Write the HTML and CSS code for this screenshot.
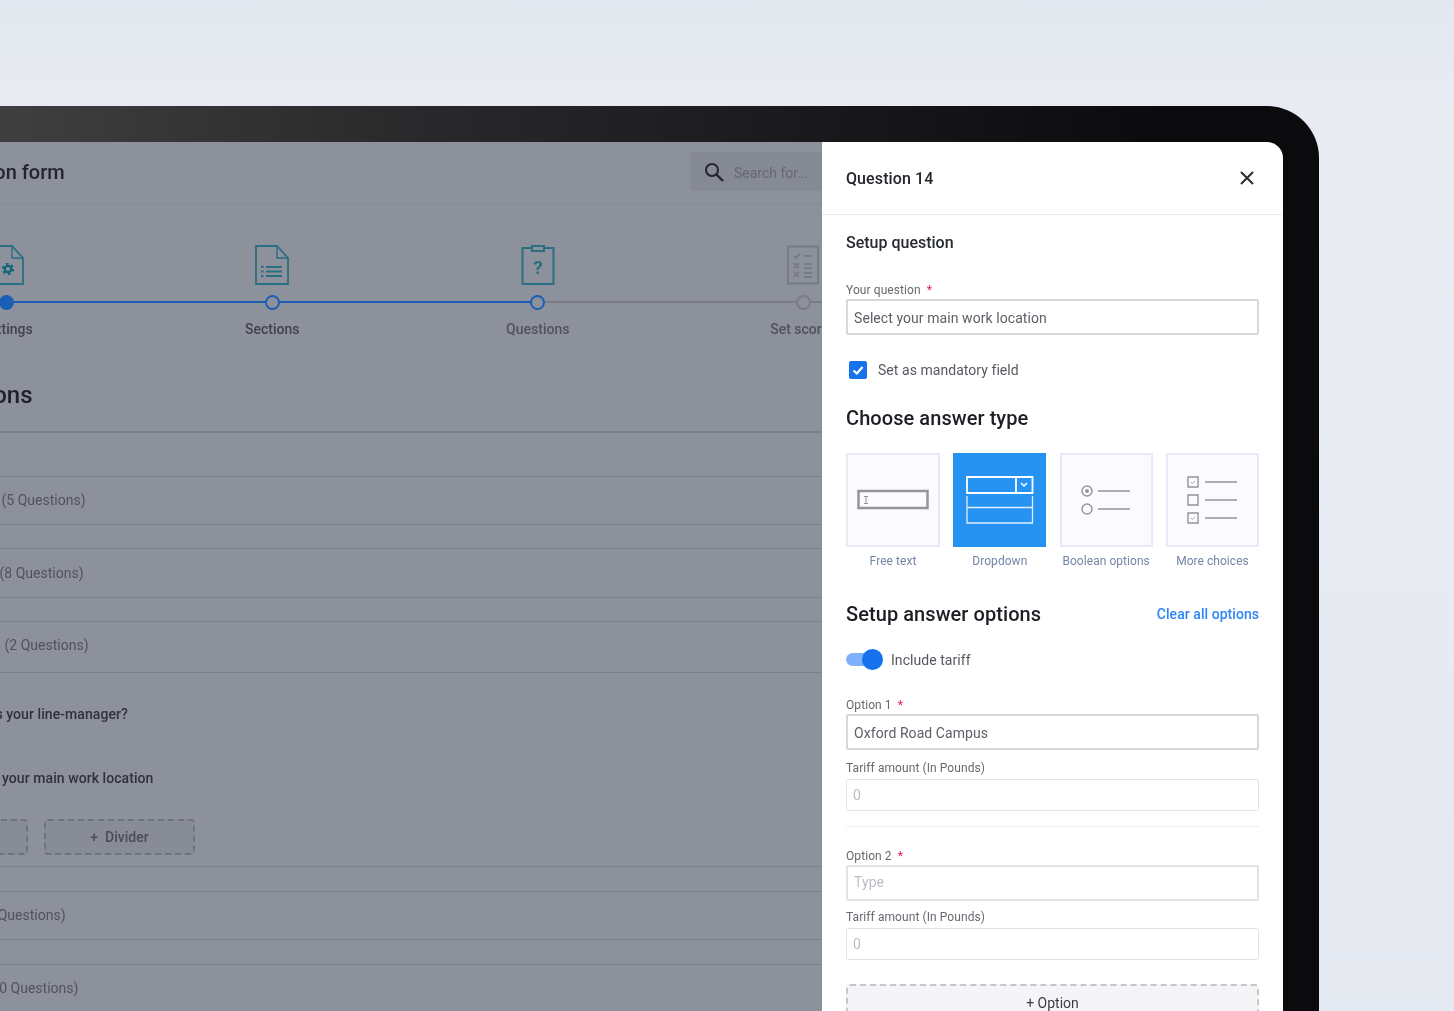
FILE: index.html
```html
<!DOCTYPE html>
<html lang="en">
<head>
<meta charset="utf-8">
<title>Question 14</title>
<link rel="stylesheet" href="styles.css">
</head>
<body>
<div class="device">
  <div class="screen">
    <main class="main">
      <div class="main-inner">
        <header class="topbar">
          <h1 class="form-title">Evaluation form</h1>
          <div class="search">
            <svg width="24" height="24" viewBox="0 0 24 24" fill="none" stroke="#22252e" stroke-width="2"><circle cx="10" cy="10" r="6"/><path d="M14.5 14.5 21 21" stroke-width="2.4"/></svg>
            <span>Search for...</span>
          </div>
        </header>
        <div class="stepper">
          <div class="step done">
            <svg class="step-icon" width="34" height="40" viewBox="0 0 34 40" fill="none" stroke="#2a6f80" stroke-width="1.8"><path d="M1 1h21l11 12v26H1z"/><path d="M22 1v12h11" stroke-width="1.4"/><circle cx="18" cy="24" r="3.2" stroke-width="2.2" stroke="#0e6478"/><circle cx="18" cy="24" r="5.2" stroke-width="1.8" stroke="#0e6478" stroke-dasharray="2.7 2.75"/></svg>
            <span class="dot"></span>
            <span class="step-label">Settings</span>
          </div>
          <div class="step active">
            <svg class="step-icon" width="34" height="40" viewBox="0 0 34 40" fill="none" stroke="#2a6f80" stroke-width="1.8"><path d="M1 1h21l11 12v26H1z"/><path d="M22 1v12h11" stroke-width="1.4"/><path d="M11 22h16M11 26.500h16M11 31h16M6 22h2.500M6 26.500h2.500M6 31h2.500" stroke-width="2"/></svg>
            <span class="dot"></span>
            <span class="step-label">Sections</span>
          </div>
          <div class="step active current">
            <svg class="step-icon" width="34" height="40" viewBox="0 0 34 40" fill="none" stroke="#2a6f80" stroke-width="2"><path d="M1.500 3h31v36h-31z"/><rect x="11" y="1" width="12" height="5" fill="#8d919c"/><text x="17" y="29" text-anchor="middle" class="icon-q">?</text></svg>
            <span class="dot"></span>
            <span class="step-label">Questions</span>
          </div>
          <div class="step">
            <svg class="step-icon" width="34" height="40" viewBox="0 0 34 40" fill="none" stroke="#777b86" stroke-width="2"><path d="M2 1.500h30v37H2z"/><path d="M8 11l2 2 4-4M8 18l5 5M13 18l-5 5M8 27l5 5M13 27l-5 5M18 11h8M18 19h8M18 23h8M18 28h8M18 32h8" stroke-width="1.800"/></svg>
            <span class="dot"></span>
            <span class="step-label">Set scores</span>
          </div>
        </div>
        <h2 class="section-title">Questions</h2>
        <div class="accordion">
          <div class="acc-row acc-first"><span class="acc-text">Section 1 (5 Questions)</span></div>
          <div class="acc-row acc-second"><span class="acc-text">Section 2 (8 Questions)</span></div>
          <div class="acc-open">
            <div class="acc-row acc-third"><span class="acc-text">Section 3 (2 Questions)</span></div>
            <p class="q q-one">Who is your line-manager?</p>
            <p class="q q-two">Select your main work location</p>
            <div class="add-row">
              <span class="add-btn add-question">+ Question</span>
              <span class="add-btn add-divider">+&nbsp; Divider</span>
            </div>
          </div>
          <div class="acc-row acc-fourth"><span class="acc-text">Section 4 (4 Questions)</span></div>
          <div class="acc-row acc-fifth"><span class="acc-text">Section 5 (10 Questions)</span></div>
        </div>
      </div>
    </main>
    <aside class="drawer">
      <header class="drawer-head">
        <h2 class="drawer-title">Question 14</h2>
        <svg width="24" height="24" viewBox="0 0 24 24" fill="none" stroke="#2a2d33" stroke-width="2"><path d="M6 6l12 12M18 6 6 18"/></svg>
      </header>
      <div class="drawer-body">
        <h3 class="sub-title">Setup question</h3>
        <label class="field-label label-question">Your question <i class="req">*</i></label>
        <div class="input input-tall">Select your main work location</div>
        <div class="check-row">
          <span class="checkbox"><svg width="18" height="18" viewBox="0 0 18 18" fill="none" stroke="#fff" stroke-width="2.200"><path d="M4.500 9.500 7.800 12.500 13.500 6"/></svg></span>
          <span class="check-text">Set as mandatory field</span>
        </div>
        <h3 class="big-title type-title">Choose answer type</h3>
        <div class="types">
          <div class="type">
            <div class="type-card">
              <svg width="72" height="22" viewBox="0 0 72 22" fill="none" stroke="#94949a"><path d="M1.500 2h69v17h-69z" stroke-width="2.500"/><path d="M7 7.500h4M7 14.500h4M9 7.500v7" stroke-width="1"/></svg>
            </div>
            <span class="type-label">Free text</span>
          </div>
          <div class="type">
            <div class="type-card selected">
              <svg width="68" height="48" viewBox="0 0 68 48" fill="none" stroke="#fff"><path d="M1 1h65.500v16H1zM50 1v16" stroke-width="1.800"/><path d="M1 20v27h65.500V20M1 31.500h65.500" stroke-width="1.300" opacity=".85"/><path d="M55 7l3 3 3-3" stroke-width="1.500"/></svg>
            </div>
            <span class="type-label">Dropdown</span>
          </div>
          <div class="type">
            <div class="type-card">
              <svg width="50" height="30" viewBox="0 0 50 30" fill="none" stroke="#94949a" stroke-width="1.400"><circle cx="6" cy="6" r="5"/><circle cx="6" cy="6" r="1.200" fill="#94949a"/><circle cx="6" cy="24" r="5"/><path d="M17 6h32M17 24h32"/></svg>
            </div>
            <span class="type-label">Boolean options</span>
          </div>
          <div class="type">
            <div class="type-card">
              <svg width="50" height="48" viewBox="0 0 50 48" fill="none" stroke="#94949a" stroke-width="1.400"><path d="M1 1h10v10H1zM1 19h10v10H1zM1 37h10v10H1z"/><path d="M4 6l1.500 1.500L8 5M4 42l1.500 1.500L8 41" stroke-width=".8"/><path d="M18 6h32M18 24h32M18 42h32"/></svg>
            </div>
            <span class="type-label">More choices</span>
          </div>
        </div>
        <div class="options-head">
          <h3 class="big-title">Setup answer options</h3>
          <a class="clear-link">Clear all options</a>
        </div>
        <div class="toggle-row">
          <span class="toggle"><span class="knob"></span></span>
          <span class="check-text">Include tariff</span>
        </div>
        <label class="field-label label-opt1">Option 1 <i class="req">*</i></label>
        <div class="input input-tall">Oxford Road Campus</div>
        <label class="field-label label-tariff">Tariff amount (In Pounds)</label>
        <div class="input input-short muted">0</div>
        <hr class="divider">
        <label class="field-label label-opt2">Option 2 <i class="req">*</i></label>
        <div class="input input-tall muted light">Type</div>
        <label class="field-label label-tariff2">Tariff amount (In Pounds)</label>
        <div class="input input-short muted light">0</div>
        <div class="add-option">+ Option</div>
      </div>
    </aside>
  </div>
</div>
</body>
</html>
```
FILE: styles.css
```css
* { box-sizing: border-box; }
html, body { margin: 0; height: 1011px; overflow: hidden; }
body {
  background: linear-gradient(180deg, #e3e8f0 0%, #e8ebf2 12%, #e5e9f1 100%);
  font-family: Roboto, "Liberation Sans", sans-serif;
  padding-top: 106px;
}
h1, h2, h3, p, hr { margin: 0; }
i { font-style: normal; }

.device {
  width: 1319px;
  height: 905px;
  padding: 36px 36px 0 0;
  border-top-right-radius: 52px;
  background: linear-gradient(90deg, #403f40 0%, #2a292b 30%, #1a191c 60%, #0b0a0c 88%);
}
.screen {
  display: flex;
  height: 869px;
  width: 1283px;
  overflow: hidden;
  border-top-right-radius: 16px;
}

/* dimmed page behind the drawer */
.main { width: 822px; flex: none; overflow: hidden; background: #8d919c; }
.main-inner { width: 822px; filter: blur(.5px); }
.topbar {
  display: flex;
  align-items: center;
  justify-content: space-between;
  height: 62px;
  border-bottom: 1px solid #858994;
}
.form-title { font-size: 20px; font-weight: 500; color: #23262f; margin: -2px 0 0 -76px; white-space: nowrap; }
.search {
  display: flex;
  align-items: center;
  gap: 8px;
  width: 132px;
  height: 39px;
  margin-top: -2px;
  padding-left: 12px;
  background: #868a95;
  border-radius: 4px 0 0 4px;
  font-size: 14px;
  color: #646873;
}
.search span { white-space: nowrap; padding-top: 2px; }

.stepper { display: flex; margin-left: -126px; height: 148px; padding-top: 41px; }
.step {
  position: relative;
  width: 265.5px;
  flex: none;
  display: flex;
  flex-direction: column;
  align-items: center;
}
.step::before {
  content: "";
  position: absolute;
  top: 56px;
  left: 50%;
  width: 265.5px;
  height: 2px;
  background: #797c85;
}
.done::before, .step.active::before { background: #1b5fb5; }
.step.current::before { background: #797c85; }
.step-icon { display: block; }
.dot {
  position: relative;
  width: 15px;
  height: 15px;
  margin-top: 10px;
  border-radius: 50%;
  border: 2px solid #797c85;
  background: #8d919c;
}
.step.active .dot { border-color: #1b5fb5; }
.done .dot { background: #1b5fb5; border-color: #1b5fb5; }
.step-label { margin-top: 11px; font-size: 14px; font-weight: 500; color: #40434d; white-space: nowrap; }
.step.current .step-label { color: #50535d; }
.step:last-child .step-label { color: #50535d; }
.icon-q { font: 700 19px Roboto, sans-serif; fill: #2a6f80; stroke: none; }

.section-title { font-size: 24px; font-weight: 500; color: #1f222b; margin: 29px 0 0 -76px; line-height: 28px; height: 50px; white-space: nowrap; }
.accordion { border-top: 2px solid #7c808b; padding-top: 43px; }
.acc-row {
  height: 49px;
  padding-bottom: 2px;
  border-top: 1px solid #7c808b;
  border-bottom: 1px solid #7c808b;
  display: flex;
  align-items: center;
  margin-bottom: 23px;
  font-size: 14px;
  color: #50535d;
  white-space: nowrap;
}
.acc-text { flex: none; }
.acc-first .acc-text { margin-left: -60px; }
.acc-second { height: 50px; padding-bottom: 0; }
.acc-second .acc-text { margin-left: -62px; }
.acc-third { height: 52px; margin-bottom: 0; padding-bottom: 5px; }
.acc-third .acc-text { margin-left: -57px; }
.acc-fourth { margin-bottom: 24px; }
.acc-fourth .acc-text { margin-left: -80px; }
.acc-fifth { border-bottom: 0; }
.acc-fifth .acc-text { margin-left: -75px; }
.q { font-size: 14px; font-weight: 500; color: #2f323c; white-space: nowrap; letter-spacing: .07px; }
.q-one { margin: 33px 0 0 -40px; line-height: 17px; }
.q-two { margin: 47px 0 0 -41px; line-height: 17px; }
.add-row { display: flex; gap: 16px; margin: 32px 0 0 -123px; }
.add-btn {
  display: flex;
  align-items: center;
  justify-content: center;
  height: 36px;
  width: 151px;
  flex: none;
  border: 2px dashed #6f737e;
  border-radius: 4px;
  background: #888c97;
  font-size: 14px;
  font-weight: 500;
  color: #4a4d57;
}
.acc-open { border-bottom: 1px solid #7c808b; height: 246px; margin-bottom: 24px; }

/* drawer */
.drawer { width: 461px; flex: none; background: #fff; }
.drawer-head {
  display: flex;
  align-items: center;
  justify-content: space-between;
  height: 73px;
  padding: 0 24px;
  border-bottom: 1px solid #ebebee;
}
.drawer-title { font-size: 16px; font-weight: 500; color: #23262c; letter-spacing: .1px; filter: blur(.3px); }
.drawer-body { padding: 0 24px; filter: blur(.3px); }
.sub-title { font-size: 16px; font-weight: 500; color: #26292f; line-height: 20px; margin-top: 18px; }
.field-label { display: block; font-size: 12px; line-height: 14px; color: #66696f; letter-spacing: .08px; }
.label-question { margin-top: 30px; }
.req { color: #ea1c50; margin-left: 3px; }
.input {
  display: flex;
  align-items: center;
  border: 2px solid #d8d8dc;
  border-radius: 2px;
  padding: 0 6px;
  font-size: 14px;
  letter-spacing: .07px;
  color: #5d6067;
  background: #fff;
}
.input-tall { height: 36px; margin-top: 2px; padding-top: 1px; }
.input-tall.muted { padding-top: 0; padding-bottom: 3px; }
.input-short { height: 32px; margin-top: 4px; border-width: 1.500px; border-color: #e3e3e7; }
.muted { color: #bcbdc2; }
.light { border-color: #e3e3e7; }
.check-row { display: flex; align-items: center; gap: 11px; margin: 26px 0 0 3px; height: 18px; }
.checkbox { width: 18px; height: 18px; border-radius: 2px; background: #1672ec; flex: none; }
.checkbox svg { display: block; }
.check-text { font-size: 14px; color: #55585f; letter-spacing: .05px; }
.big-title { font-size: 20px; font-weight: 500; color: #1c1e23; line-height: 24px; letter-spacing: .07px; }
.type-title { margin-top: 27px; }
.types { display: grid; grid-template-columns: 94px 93px 93px 93px; column-gap: 13.33px; margin-top: 23px; }
.type { display: flex; flex-direction: column; align-items: center; }
.type-card {
  width: 100%;
  height: 94px;
  display: flex;
  align-items: center;
  justify-content: center;
  background: #fafaff;
  border: 2px solid #e7eaf5;
}
.type-card.selected { background: #2693f3; border-color: #2693f3; }
.type-label { margin-top: 7px; font-size: 12px; line-height: 14px; color: #7486a8; white-space: nowrap; letter-spacing: .05px; }
.options-head { display: flex; align-items: center; justify-content: space-between; margin-top: 34px; }
.clear-link { font-size: 14px; font-weight: 500; color: #2d86f6; letter-spacing: .05px; }
.toggle-row { display: flex; align-items: center; gap: 8px; height: 22px; margin-top: 23px; }
.toggle { position: relative; width: 37px; height: 22px; display: block; flex: none; }
.toggle::before { content: ""; position: absolute; left: 0; top: 4px; width: 29px; height: 13px; border-radius: 7px; background: #7fb0fb; }
.knob { position: absolute; right: 0; top: 0; width: 21px; height: 21px; border-radius: 50%; background: #1672ec; }
.label-opt1 { margin-top: 27px; }
.label-tariff { margin-top: 11px; }
.divider { border: 0; height: 1px; background: #eeeef0; margin-top: 15px; }
.label-opt2 { margin-top: 22px; }
.label-tariff2 { margin-top: 9px; }
.add-option {
  height: 60px;
  margin-top: 24px;
  padding-top: 9px;
  text-align: center;
  font-size: 14px;
  color: #3b3d44;
  background: #f5f4f6;
  border: 2px dashed #c5c5ca;
  border-radius: 4px;
}
```
